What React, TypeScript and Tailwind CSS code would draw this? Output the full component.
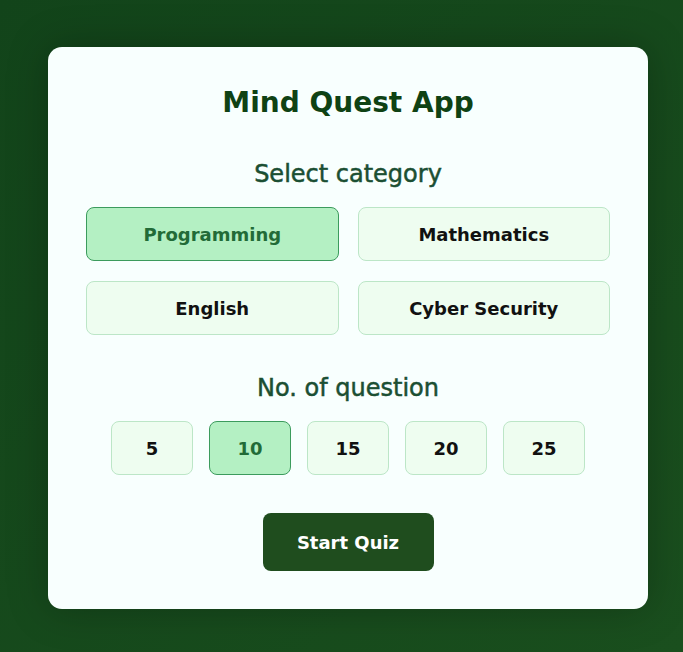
import { useState } from 'react';

const categories = ['Programming', 'Mathematics', 'English', 'Cyber Security'];
const counts = [5, 10, 15, 20, 25];

export default function App() {
    const [category, setCategory] = useState('Programming');
    const [count, setCount] = useState(10);

    return (
        <div className="min-h-screen w-full flex items-center justify-center pl-[13px] pt-[4px] bg-gradient-to-br from-[#12441a] to-[#1a4f1e] font-['DejaVu_Sans',sans-serif]">
            <div className="w-[600px] bg-[#f8fffe] rounded-[14px] p-[38px] shadow-[0_0_40px_rgba(0,0,0,0.25)] flex flex-col items-center">
                <h1 className="text-[28px] leading-[36px] font-bold text-[#0f4214]">Mind Quest App</h1>

                {/* DejaVu has no medium weight, so thicken the book face a little */}
                <h2 className="mt-[37px] text-[24px] leading-[32px] font-normal text-[#1b4f33] [-webkit-text-stroke:0.5px_#1b4f33]">Select category</h2>
                <div className="mt-[17px] w-full grid grid-cols-2 gap-x-[19px] gap-y-[20px]">
                    {categories.map(c => (
                        <button
                            key={c}
                            onClick={() => setCategory(c)}
                            className={`h-[54px] rounded-[8px] border text-[18px] font-semibold ${category === c
                                ? 'bg-[#b4f0c3] border-[#3c9b5d] text-[#226b37]'
                                : 'bg-[#eefdf0] border-[#bce6c7] text-[#111111]'}`}
                        >
                            {c}
                        </button>
                    ))}
                </div>

                <h2 className="mt-[37px] text-[24px] leading-[32px] font-normal text-[#1b4f33] [-webkit-text-stroke:0.5px_#1b4f33]">No. of question</h2>
                <div className="mt-[17px] flex gap-[16px]">
                    {counts.map(n => (
                        <button
                            key={n}
                            onClick={() => setCount(n)}
                            className={`w-[82px] h-[54px] rounded-[8px] border text-[18px] font-semibold ${count === n
                                ? 'bg-[#b4f0c3] border-[#3c9b5d] text-[#226b37]'
                                : 'bg-[#eefdf0] border-[#bce6c7] text-[#111111]'}`}
                        >
                            {n}
                        </button>
                    ))}
                </div>

                <button className="mt-[38px] w-[171px] h-[58px] rounded-[8px] bg-[#1f4d1e] text-white text-[18px] font-semibold">
                    Start Quiz
                </button>
            </div>
        </div>
    );
}
